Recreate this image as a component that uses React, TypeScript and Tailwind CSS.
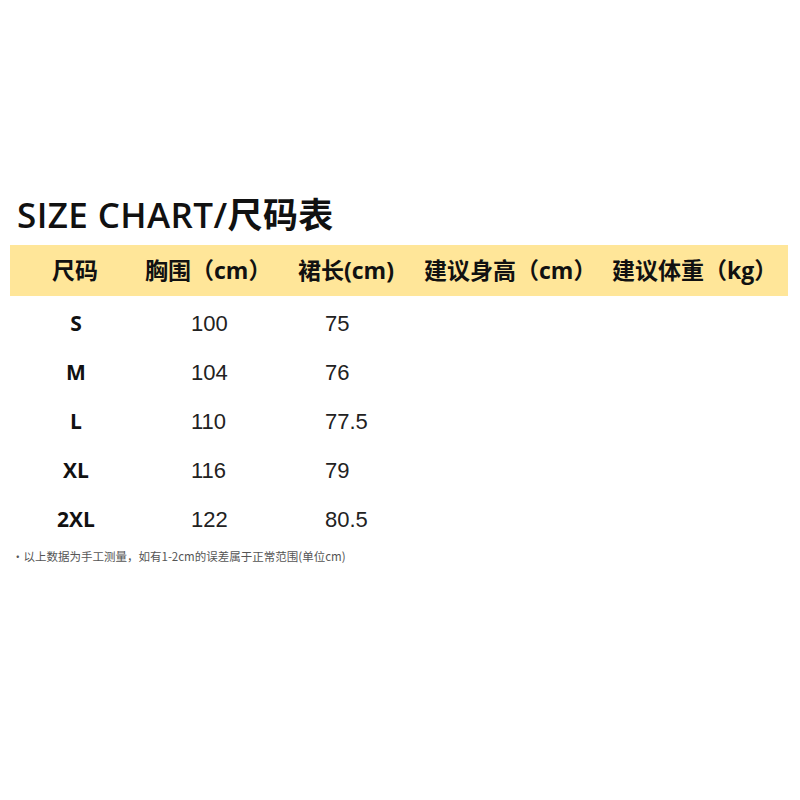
const rows = [
  { size: "S", chest: "100", length: "75" },
  { size: "M", chest: "104", length: "76" },
  { size: "L", chest: "110", length: "77.5" },
  { size: "XL", chest: "116", length: "79" },
  { size: "2XL", chest: "122", length: "80.5" },
];

const cjk = "font-['Open_Sans','Noto_Sans_CJK_SC',sans-serif]";

export default function App() {
  return (
    <div className="h-[800px] w-[800px] bg-white pt-[192px] text-[#111]">
      {/* title */}
      <h1 className={`${cjk} pl-[17px] text-[35px] font-semibold leading-[46px] tracking-[0.4px]`}>
        SIZE CHART/尺码表
      </h1>

      <div className="mx-[10px] mt-[7px] w-[778px]">
        {/* header bar */}
        <div
          className={`${cjk} flex h-[51px] items-center bg-[#ffe699] pl-[42px] text-[23px] font-bold whitespace-nowrap`}
        >
          <div className="w-[93px]">尺码</div>
          <div className="w-[153px]">胸围（cm）</div>
          <div className="w-[126px]">裙长(cm)</div>
          <div className="w-[188px]">建议身高（cm）</div>
          <div>建议体重（kg）</div>
        </div>

        {/* data rows */}
        <div className="pt-[3px]">
          {rows.map((r) => (
            <div
              key={r.size}
              className="grid h-[49px] grid-cols-[132px_122px_164px_160px_1fr] items-center"
            >
              <div className={`${cjk} text-center text-[21px] font-bold`}>{r.size}</div>
              <div className="pl-[49px] font-['Liberation_Sans',sans-serif] text-[22px] text-[#222]">
                {r.chest}
              </div>
              <div className="pl-[61px] font-['Liberation_Sans',sans-serif] text-[22px] text-[#222]">
                {r.length}
              </div>
              <div />
              <div />
            </div>
          ))}
        </div>
      </div>

      {/* note */}
      <p className="mt-[4px] pl-[12px] font-['Noto_Sans_CJK_SC',sans-serif] text-[11.5px] leading-[16px] text-[#555]">
        •以上数据为手工测量，如有1-2cm的误差属于正常范围(单位cm)
      </p>
    </div>
  );
}
